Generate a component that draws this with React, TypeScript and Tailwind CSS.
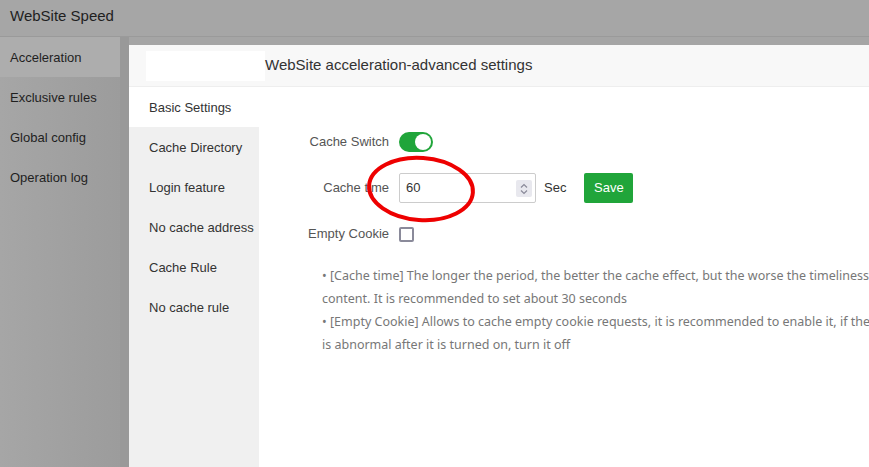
import React from "react";

const font = { fontFamily: '"Liberation Sans", Arial, sans-serif' };

const tabs = [
  "Basic Settings",
  "Cache Directory",
  "Login feature",
  "No cache address",
  "Cache Rule",
  "No cache rule",
];

const menu = ["Acceleration", "Exclusive rules", "Global config", "Operation log"];

export default function App() {
  return (
    <div
      className="relative w-[869px] h-[467px] overflow-hidden bg-[#a5a5a5] text-[#1f1f1f]"
      style={font}
    >
      {/* page behind the mask */}
      <div className="h-[37px] pt-[6px] px-[10px] border-b border-[#9a9a9a] bg-[#a6a6a6] text-[15px] leading-[20px]">
        WebSite Speed
      </div>
      <div className="flex h-[430px]">
        <div className="w-[120px] bg-gradient-to-r from-[#a6a6a6] to-[#9c9c9c] text-[13px]">
          {menu.map((m, i) => (
            <div
              key={m}
              className={`h-[40px] flex items-center px-[10px] pt-[1px] ${i === 0 ? "bg-[#adadad]" : ""}`}
            >
              {m}
            </div>
          ))}
        </div>
        <div className="w-[9px] bg-[#999999]" />
      </div>

      {/* modal */}
      <div className="absolute left-[129px] top-[45px] w-[820px] h-[440px] bg-white flex flex-col">
        <div className="h-[42px] shrink-0 flex items-center bg-[#f8f8f8] border-b border-[#eeeeee]">
          <div className="ml-[17px] w-[119px] h-[30px] bg-white" />
          <span className="text-[15px] text-[#333]">WebSite acceleration-advanced settings</span>
        </div>
        <div className="flex flex-1">
          <div className="w-[130px] bg-[#f0f0f0] text-[13px] text-[#333]">
            {tabs.map((t, i) => (
              <div
                key={t}
                className={`h-[40px] flex items-center pl-[20px] pt-[1px] ${i === 0 ? "bg-white" : ""}`}
              >
                {t}
              </div>
            ))}
          </div>
          <div className="flex-1 pt-[40px] text-[13px] text-[#555]">
            <div className="flex items-center h-[30px]">
              <div className="w-[140px] text-right pr-[10px]">Cache Switch</div>
              <div className="relative w-[34px] h-[20px] rounded-full bg-[#20a53a]">
                <div className="absolute right-[2px] top-[2px] w-[16px] h-[16px] rounded-full bg-white" />
              </div>
            </div>
            <div className="flex items-center h-[30px] mt-[16px]">
              <div className="w-[140px] text-right pr-[10px]">Cache time</div>
              <div className="relative w-[137px] h-[30px] border border-[#cccccc] rounded-[2px] flex items-center pl-[6px] text-[#333]">
                60
                <div className="absolute right-[3px] top-[6px] w-[16px] h-[17px] bg-[#e8e8ee] rounded-[2px] flex flex-col items-center justify-center">
                  <svg width="10" height="14" viewBox="0 0 10 14" fill="none" stroke="#8a8a99" strokeWidth="1.2">
                    <path d="M2 5.5 L5 2.5 L8 5.5" />
                    <path d="M2 8.5 L5 11.5 L8 8.5" />
                  </svg>
                </div>
              </div>
              <span className="ml-[8px] text-[#333]">Sec</span>
              <button className="ml-[18px] h-[30px] w-[49px] bg-[#20a53a] text-white rounded-[2px] text-[13px]">
                Save
              </button>
            </div>
            <div className="flex items-center h-[30px] mt-[16px]">
              <div className="w-[140px] text-right pr-[10px]">Empty Cookie</div>
              <div className="w-[15px] h-[15px] border-2 border-[#8a8a9a] rounded-[2px]" />
            </div>
            <ul
              className="mt-[15px] ml-[63px] text-[12.5px] leading-[23px] text-[#777] whitespace-nowrap"
              style={{ fontFamily: '"Noto Sans", "Open Sans", sans-serif' }}
            >
              <li>
                • [Cache time] The longer the period, the better the cache effect, but the worse the timeliness of the
                <br />
                content. It is recommended to set about 30 seconds
              </li>
              <li>
                • [Empty Cookie] Allows to cache empty cookie requests, it is recommended to enable it, if the website
                <br />
                is abnormal after it is turned on, turn it off
              </li>
            </ul>
          </div>
        </div>
      </div>

      {/* annotation ellipse */}
      <svg className="absolute left-0 top-0 pointer-events-none" width="869" height="467">
        <ellipse cx="421" cy="189" rx="52" ry="31" fill="none" stroke="#ee0000" strokeWidth="4" transform="rotate(4 421 189)" />
      </svg>
    </div>
  );
}
